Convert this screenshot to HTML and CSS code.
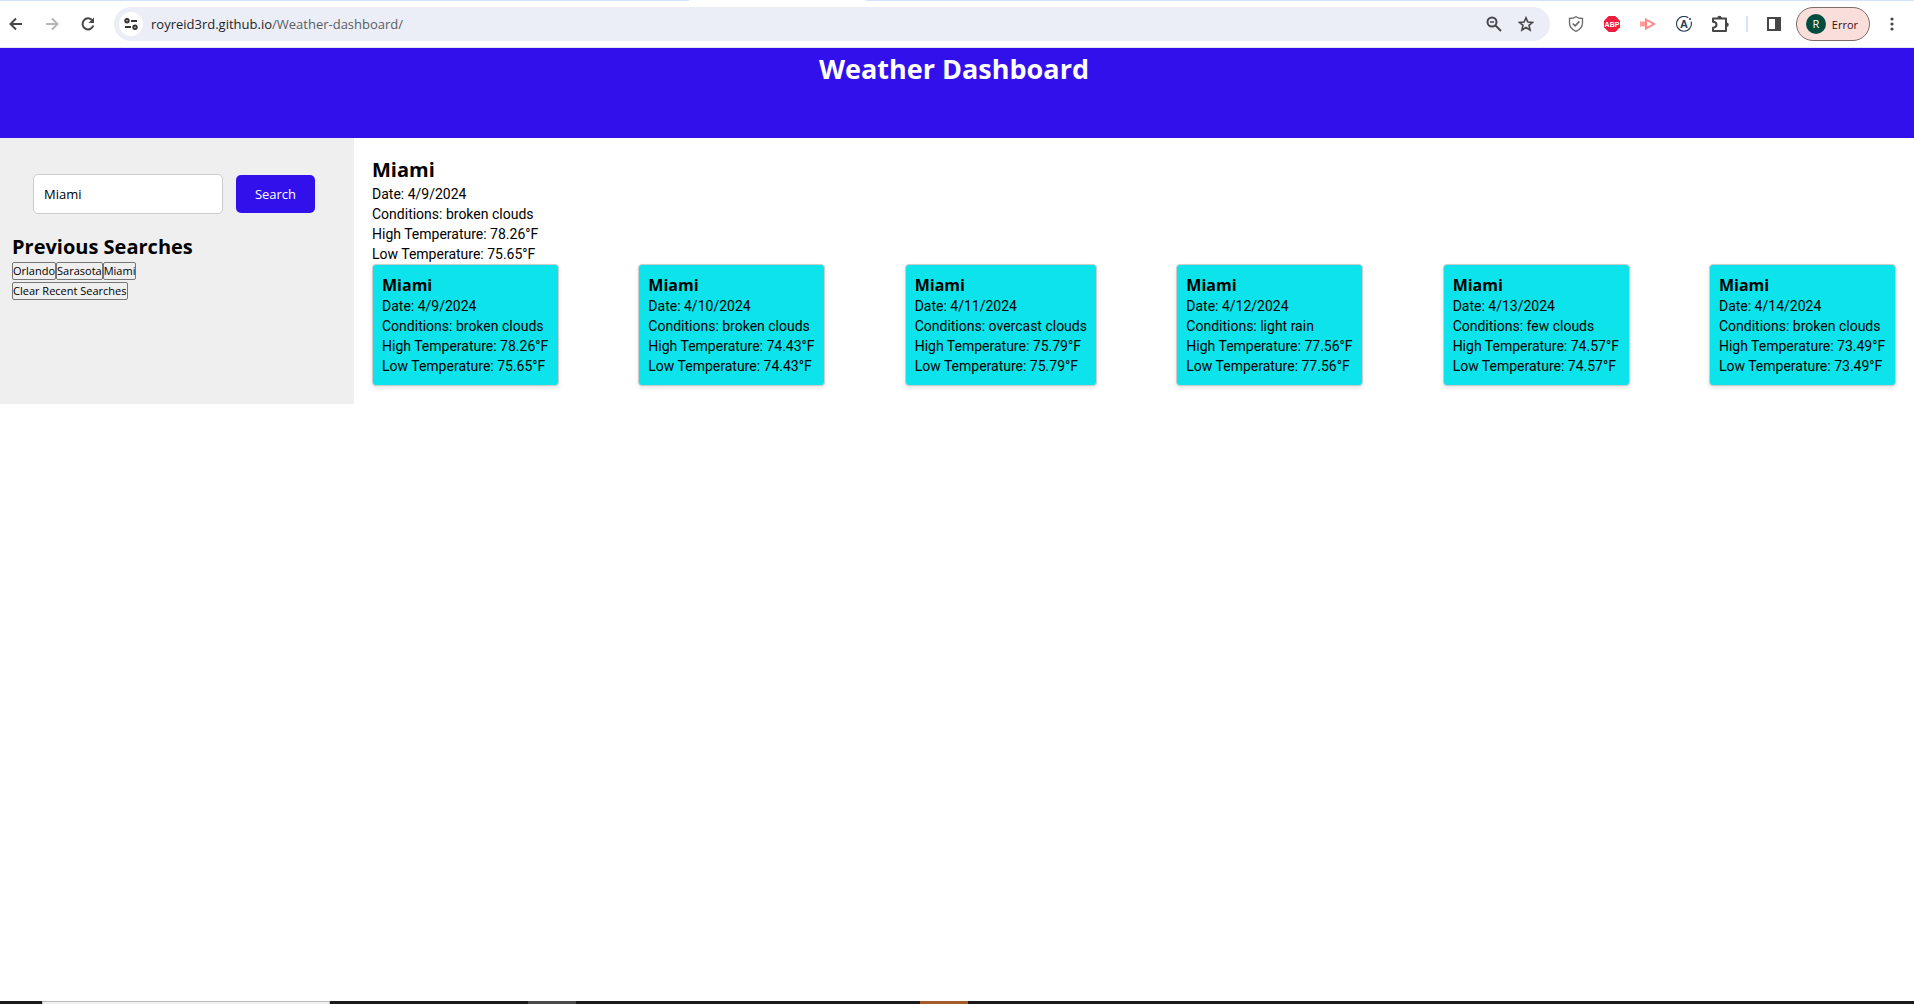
FILE: index.html
```html
<!DOCTYPE html>
<html lang="en">
<head>
<meta charset="utf-8">
<meta name="viewport" content="width=device-width, initial-scale=1">
<title>Weather Dashboard</title>
<link rel="stylesheet" href="styles.css">
</head>
<body>
<div class="tab-strip"><span class="active-tab"></span></div>
<nav class="toolbar" aria-label="Browser toolbar">
  <button class="icon-button" aria-label="Back"><svg width="16" height="16" viewBox="0 0 16 16" fill="none" stroke="#474747" stroke-width="2"><path d="M14 8H3M8 2.500L2.500 8L8 13.500"/></svg></button>
  <button class="icon-button" aria-label="Forward"><svg width="16" height="16" viewBox="0 0 16 16" fill="none" stroke="#b5b5b5" stroke-width="2"><path d="M2 8H13M8 2.500L13.500 8L8 13.500"/></svg></button>
  <button class="icon-button" aria-label="Reload"><svg width="16" height="16" viewBox="0 0 16 16" fill="none" stroke="#474747" stroke-width="2"><path d="M13.300 9.500A5.500 5.500 0 1 1 12.400 4.500"/><path d="M14 1.500V7H8.500Z" fill="#474747" stroke="none"/></svg></button>
  <div class="address-bar">
    <button class="site-info" aria-label="Site information"><svg width="14" height="12" viewBox="0 0 14 12" fill="none" stroke="#333" stroke-width="2"><circle cx="3" cy="2.800" r="1.700"/><path d="M7 3H13M1 9H7"/><circle cx="11" cy="9.200" r="1.700"/></svg></button>
    <a class="address" href="#">royreid3rd.github.io<span class="path">/Weather-dashboard/</span></a>
    <button class="icon-button" aria-label="Zoom"><svg width="16" height="16" viewBox="0 0 16 16" fill="none" stroke="#474747" stroke-width="2"><circle cx="6" cy="6" r="4.500"/><path d="M9.500 9.500L15 15"/><path d="M4 6H8" stroke-width="1.500"/></svg></button>
    <button class="icon-button" aria-label="Bookmark"><svg width="16" height="16" viewBox="0 0 16 16" fill="none" stroke="#474747" stroke-width="1.600"><path d="M8 1.800L9.900 6L14.500 6.400L11 9.400L12.100 14L8 11.500L3.900 14L5 9.400L1.500 6.400L6.100 6Z"/></svg></button>
  </div>
  <div class="extensions">
    <button class="icon-button" aria-label="Shield"><svg width="16" height="16" viewBox="0 0 16 16" fill="none" stroke="#6b6b6b"><path d="M8 .7Q10.500 2.500 14.500 2.500V7Q14.500 12.500 8 15.400Q1.500 12.500 1.500 7V2.500Q5.500 2.500 8 .7Z" stroke-width="1.300"/><path d="M4.800 7.600L7.200 9.900L11.400 5.400" stroke-width="1.600"/></svg></button>
    <button class="icon-button abp" aria-label="Adblock Plus"><svg width="16" height="16" viewBox="0 0 16 16"><path d="M4.700 0H11.300L16 4.700V11.300L11.300 16H4.700L0 11.300V4.700Z" fill="#ee1c3e"/><text x="8" y="11" text-anchor="middle">ABP</text></svg></button>
    <button class="icon-button" aria-label="Recorder"><svg width="16" height="16" viewBox="0 0 16 16"><path d="M0 5.500H5V10.500H0Z" fill="#ff9d9b"/><path d="M6 3.500L14 8L6 12.500Z" fill="none" stroke="#ff8683" stroke-width="2"/></svg></button>
    <button class="icon-button apollo" aria-label="Apollo"><svg width="16" height="16" viewBox="0 0 16 16"><path d="M12.300 1.800A7.400 7.400 0 1 0 15 5.500" fill="none" stroke="#273c57" stroke-width="1.100"/><circle cx="14" cy="3" r="1" fill="#273c57"/><text x="8" y="12" text-anchor="middle">A</text></svg></button>
    <button class="icon-button" aria-label="Extensions"><svg width="18" height="18" viewBox="0 0 18 18" fill="none" stroke="#474747" stroke-width="2" stroke-linejoin="round"><path d="M2 3.500H15V16H2V12.700Q5.500 12.500 5.500 9.800Q5.500 7 2 6.800Z"/><path d="M6.300 3A2.200 2.200 0 0 1 10.700 3ZM15.500 7.500A2.200 2.200 0 0 1 15.500 12Z" fill="#474747" stroke="none"/></svg></button>
    <span class="divider"></span>
    <button class="icon-button" aria-label="Side panel"><svg width="16" height="16" viewBox="0 0 16 16"><path d="M2 2H14V14H2Z" fill="none" stroke="#474747" stroke-width="2"/><path d="M9 2H14V14H9Z" fill="#474747"/></svg></button>
  </div>
  <button class="profile"><span class="avatar">R</span>Error</button>
  <button class="icon-button" aria-label="Menu"><svg width="16" height="16" viewBox="0 0 16 16" fill="#474747"><circle cx="8" cy="3" r="1.600"/><circle cx="8" cy="8" r="1.600"/><circle cx="8" cy="13" r="1.600"/></svg></button>
</nav>

<header class="banner"><h1>Weather Dashboard</h1></header>
<div class="dashboard">
  <aside class="sidebar">
    <form class="search">
      <input type="text" value="Miami" aria-label="City">
      <button type="button">Search</button>
    </form>
    <h2>Previous Searches</h2>
    <div class="history"><button>Orlando</button><button>Sarasota</button><button>Miami</button></div>
    <div class="history"><button>Clear Recent Searches</button></div>
  </aside>
  <main class="content">
    <section>
      <h2>Miami</h2>
      <p>Date: 4/9/2024</p>
      <p>Conditions: broken clouds</p>
      <p>High Temperature: 78.26°F</p>
      <p>Low Temperature: 75.65°F</p>
    </section>
    <section class="forecast">
      <article class="card"><h3>Miami</h3><p>Date: 4/9/2024</p><p>Conditions: broken clouds</p><p>High Temperature: 78.26°F</p><p>Low Temperature: 75.65°F</p></article>
      <article class="card"><h3>Miami</h3><p>Date: 4/10/2024</p><p>Conditions: broken clouds</p><p>High Temperature: 74.43°F</p><p>Low Temperature: 74.43°F</p></article>
      <article class="card"><h3>Miami</h3><p>Date: 4/11/2024</p><p>Conditions: overcast clouds</p><p>High Temperature: 75.79°F</p><p>Low Temperature: 75.79°F</p></article>
      <article class="card"><h3>Miami</h3><p>Date: 4/12/2024</p><p>Conditions: light rain</p><p>High Temperature: 77.56°F</p><p>Low Temperature: 77.56°F</p></article>
      <article class="card"><h3>Miami</h3><p>Date: 4/13/2024</p><p>Conditions: few clouds</p><p>High Temperature: 74.57°F</p><p>Low Temperature: 74.57°F</p></article>
      <article class="card"><h3>Miami</h3><p>Date: 4/14/2024</p><p>Conditions: broken clouds</p><p>High Temperature: 73.49°F</p><p>Low Temperature: 73.49°F</p></article>
    </section>
  </main>
</div>
<footer class="taskbar"><span class="task open"></span><span class="task gray"></span><span class="task orange"></span></footer>
</body>
</html>
```
FILE: styles.css
```css
* { box-sizing: border-box; margin: 0; padding: 0; }

body {
  display: flex;
  flex-direction: column;
  min-height: 100vh;
  background: #fff;
  color: #000;
  font-family: "Open Sans", "Noto Sans", sans-serif;
  font-size: 13px;
  line-height: 20px;
}

button, input { font-family: inherit; }

/* Browser frame */
.tab-strip { height: 1px; background: #d3e3fd; }
.active-tab { display: block; width: 177px; height: 1px; margin-left: 36%; background: #fff; }

.toolbar {
  display: flex;
  align-items: center;
  height: 47px;
  padding: 0 14px 0 8px;
  border-bottom: 1px solid #e3e6f0;
  background: #fff;
}

.icon-button {
  display: flex;
  flex: none;
  align-items: center;
  justify-content: center;
  width: 16px;
  height: 18px;
  border: 0;
  background: none;
}
.icon-button svg { flex: none; }
.toolbar > .icon-button { margin-right: 20px; }
.toolbar > .icon-button:last-child { margin-right: 0; }

.address-bar {
  display: flex;
  flex: 1;
  align-items: center;
  gap: 16px;
  height: 34px;
  margin-left: -2px;
  padding: 0 16px 0 5px;
  border-radius: 17px;
  background: #ebeef7;
}
.site-info {
  display: flex;
  align-items: center;
  justify-content: center;
  width: 24px;
  height: 24px;
  border: 0;
  border-radius: 50%;
  background: #fff;
}
.address { flex: 1; margin-left: -8px; color: #1f1f1f; text-decoration: none; }
.path { color: #5a5d63; }

.extensions { display: flex; align-items: center; gap: 20px; margin: 0 14px 0 18px; }
.divider { width: 2px; height: 16px; margin: 0 -2px; background: #d3e3fd; }
.abp text { fill: #fff; font: bold 7px "Liberation Sans", sans-serif; }
.apollo text { fill: #273c57; font: bold 11px "Liberation Sans", sans-serif; }

.profile {
  display: flex;
  align-items: center;
  gap: 6px;
  height: 34px;
  margin-right: 14px;
  padding: 0 11px 0 9px;
  border: 1px solid #7c6d6b;
  border-radius: 17px;
  background: #f9dedc;
  color: #410e0b;
  font-size: 11px;
}
.avatar {
  width: 20px;
  height: 20px;
  border-radius: 50%;
  background: #004d40;
  color: #fff;
  line-height: 20px;
}

/* Dashboard */
.banner {
  height: 90px;
  padding: 2px 6px 0 0;
  background: #3210ec;
  color: #fff;
  text-align: center;
}
h1 { font-size: 27px; line-height: 38px; }
h2 { font-size: 20px; line-height: 28px; }
h3 { font-size: 16px; line-height: 22px; }

.dashboard { display: flex; }
.sidebar { width: 354px; padding: 36px 12px; background: #efefef; }

.search {
  display: flex;
  align-items: center;
  gap: 13px;
  margin-bottom: 19px;
  padding: 0 27px 0 21px;
}
.search input {
  flex: 1;
  min-width: 0;
  height: 40px;
  padding: 0 10px;
  border: 1px solid #ccc;
  border-radius: 5px;
  background: #fff;
  font-size: 13px;
}
.search button {
  width: 79px;
  height: 38px;
  border: 0;
  border-radius: 5px;
  background: #3210ec;
  color: #fff;
  font-size: 13px;
}

.history { display: flex; align-items: center; height: 20px; }
.history button {
  height: 18px;
  border: 1px solid #767676;
  border-radius: 2px;
  background: #efefef;
  color: #000;
  font-size: 11px;
  line-height: 16px;
}

.content { flex: 1; padding: 18px; }
.content p { font-family: Roboto, "Open Sans", sans-serif; font-size: 14px; }
.forecast { display: flex; justify-content: space-between; }
.card {
  min-width: 187px;
  padding: 9px;
  border: 1px solid #ccc;
  border-radius: 4px;
  background: #0ce3eb;
  box-shadow: 0 2px 4px rgba(0, 0, 0, .1);
}

/* Desktop taskbar */
.taskbar { display: flex; height: 3px; margin-top: auto; padding-left: 42px; background: #1b1b1d; }
.task { width: 48px; }
.open { width: 288px; border: 1px solid #bbb; border-bottom: 0; background: #f0f0f0; }
.gray { margin-left: 198px; background: #4a4a4c; }
.orange { margin-left: 344px; background: #a65c2a; }
```
